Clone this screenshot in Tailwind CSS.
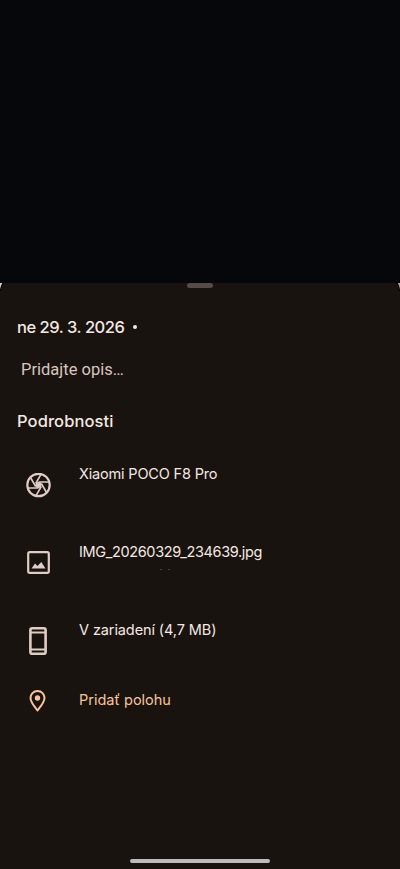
<!DOCTYPE html>
<html lang="sk">
<head>
<meta charset="utf-8">
<meta name="viewport" content="width=device-width, initial-scale=1">
<title>Podrobnosti</title>
<script src="https://cdn.jsdelivr.net/npm/@tailwindcss/browser@4"></script>
</head>
<body class="bg-[#06070b]">
<main class="flex h-[869px] w-[400px] flex-col overflow-hidden font-['Inter',sans-serif] text-[#f5e8e2]">
  <div class="h-[283px] shrink-0 bg-[#06070b]"></div>
  <section class="relative flex flex-1 flex-col bg-[#18130f]">
    <!-- photo showing behind the sheet's rounded corners -->
    <svg class="absolute left-0 top-0" width="4" height="8" viewBox="0 0 4 8"><path d="M0 0h4Q1.4 2.500 1.200 7.500L0 8z" fill="#050403"/><path d="M0 0h2.200Q1 2 0 6.500z" fill="#d8d3ca"/></svg>
    <svg class="absolute right-0 top-0" width="4" height="8" viewBox="0 0 4 8"><path d="M4 0H0Q2.600 2.500 2.800 7.500L4 8z" fill="#050403"/><path d="M4 0H1.800Q3 2 4 6.500z" fill="#b5a18e"/></svg>
    <div class="ml-[187px] h-[5px] w-[26px] rounded-full bg-[#574b46]"></div>

    <header class="flex h-[78px] items-center pl-[17px]">
      <h1 class="whitespace-nowrap text-[16.500px] leading-5 font-medium tracking-[-0.47px]">ne 29. 3. 2026</h1>
      <span class="ml-[9px] size-[4px] rounded-full bg-[#f5e8e2]"></span>
    </header>
    <p class="-mt-[7px] h-5 pl-[21px] font-['Roboto',sans-serif] text-[16.500px] leading-[22px] text-[#d8c6be]">Pridajte opis…</p>
    <h2 class="mt-[32px] h-5 pl-[17px] text-[16.500px] leading-5 font-medium tracking-[0.1px]">Podrobnosti</h2>

    <ul class="mt-[33px] flex flex-col text-[14.500px] leading-5">
      <li class="flex h-[78px]">
        <div class="flex w-[79px] pl-[26px] pt-[9px]">
          <svg width="25" height="25" viewBox="0 0 25 25" fill="none" stroke="#dfcdc5" stroke-width="1.600">
            <circle cx="12.500" cy="12" r="11.200" stroke-width="2.200"/>
            <g transform="translate(0 -.5)"><circle cx="12.500" cy="12.500" r="3" fill="#dfcdc5" stroke="none"/>
            <path d="M9.700 11 15.100 1.700M12.500 9.500H22.500M15.300 11 20.500 20M15.300 14 9.900 23.300M12.500 15.500H2.500M9.700 14 4.500 5"/></g>
          </svg>
        </div>
        <span class="whitespace-nowrap tracking-[-0.17px]">Xiaomi POCO F8 Pro</span>
      </li>
      <li class="flex h-[78px]">
        <div class="flex w-[79px] pl-[27px] pt-[9px]">
          <svg width="23" height="23" viewBox="0 0 23 23" fill="none"><rect x="1.200" y="1.200" width="20.600" height="20.600" rx="1.600" stroke="#dfcdc5" stroke-width="2.200"/><path d="M4.500 17.500 8 12.500 10.500 15 14.300 11 18.500 17.500z" fill="#dfcdc5"/></svg>
        </div>
        <span class="relative whitespace-nowrap tracking-[-0.36px]">IMG_20260329_234639.jpg
          <i class="absolute left-[81px] top-[27px] h-px w-[2px] bg-[#49433f]"></i><i class="absolute left-[89px] top-[27px] h-px w-[2px] bg-[#49433f]"></i></span>
      </li>
      <li class="flex h-[70px]">
        <div class="flex w-[79px] pl-[29px] pt-[7px]">
          <svg width="18" height="28" viewBox="0 0 18 28" fill="none" stroke="#dfcdc5"><rect x="1.400" y="1.300" width="15.200" height="25.400" rx="1.800" stroke-width="2.600"/><path d="M2 5.500h14M2 22.500h14" stroke-width="2"/></svg>
        </div>
        <span class="whitespace-nowrap tracking-[-0.1px]">V zariadení (4,7 MB)</span>
      </li>
      <li class="flex h-5 text-[#f8c39c]">
        <div class="flex w-[79px] pl-[29px]">
          <svg width="17" height="22" viewBox="0 0 17 22"><path d="M8.500 1.100C4.300 1.100 1.500 4.200 1.500 8.100c0 4.300 3.500 8.100 7 12.200 3.500-4.100 7-7.900 7-12.200 0-3.900-2.800-7-7-7z" fill="none" stroke="#f8c39c" stroke-width="2"/><circle cx="8.500" cy="8" r="2.700" fill="#f8c39c"/></svg>
        </div>
        <span class="whitespace-nowrap">Pridať polohu</span>
      </li>
    </ul>
    <div class="mx-auto mb-[6px] mt-auto h-[4px] w-[140px] rounded-full bg-[#bfbbb8]"></div>
  </section>
</main>
</body>
</html>
